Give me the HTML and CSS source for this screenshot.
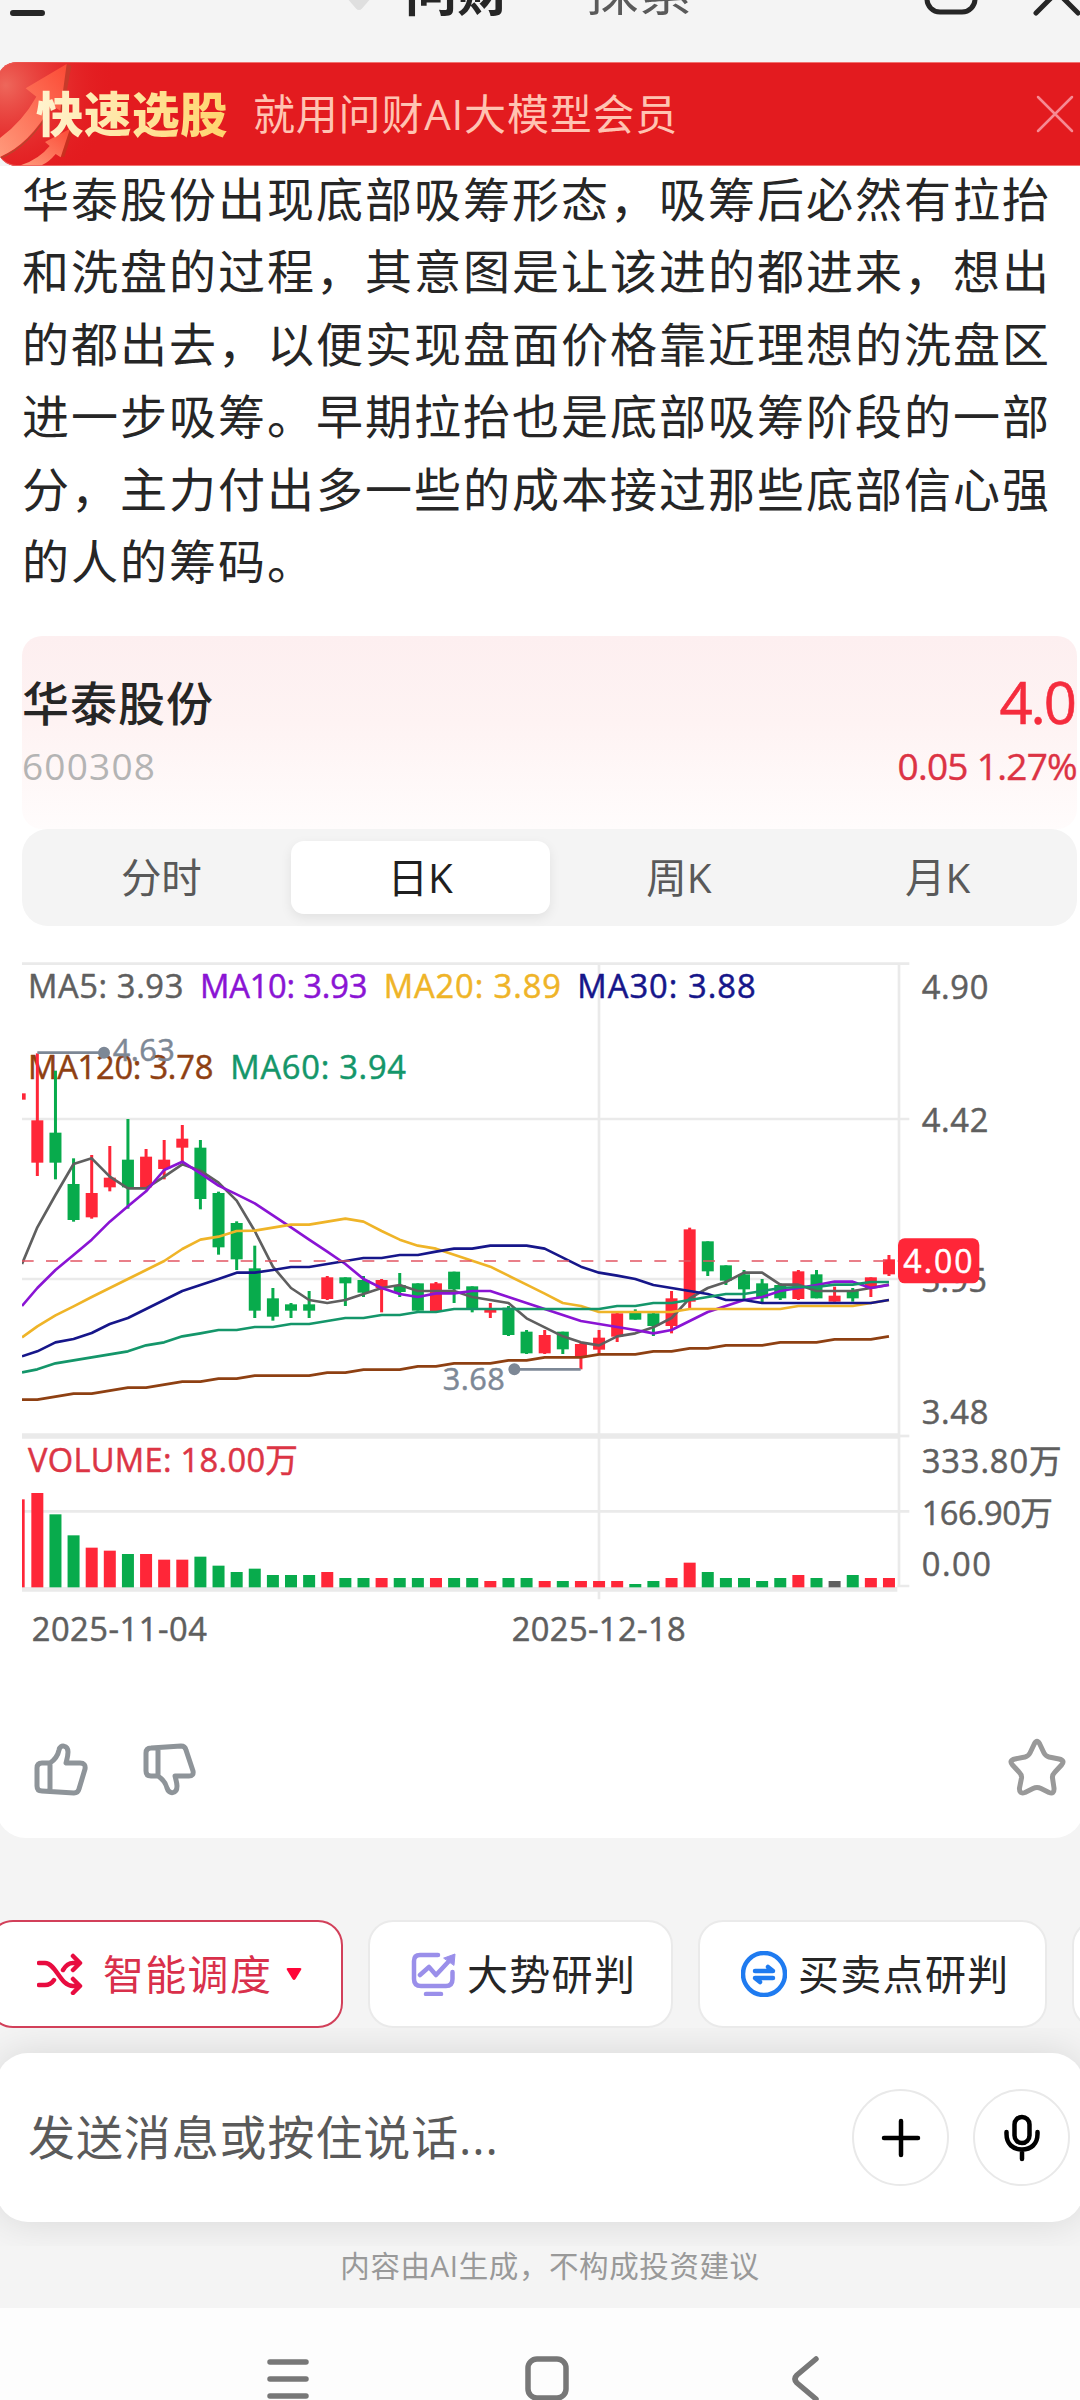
FILE: index.html
```html
<!DOCTYPE html>
<html lang="zh-CN">
<head>
<meta charset="utf-8">
<title>问财</title>
<link rel="stylesheet" href="styles.css">
</head>
<body>
<header class="topbar">
  <div class="topbar-row">
    <svg class="menu-icon" width="35" height="46" viewBox="0 0 35 46"><path d="M3 3H32M3 23H24M3 43H32" /></svg>
    <svg class="gem" width="30" height="30" viewBox="0 0 30 30"><path d="M4 4H26L28 15L18 26.500Q15 29.500 12 26.500L2 15Z"/></svg>
    <span class="tab-main">问财</span>
    <span class="tab-sub">探索</span>
    <svg class="copy-icon" width="56" height="56" viewBox="0 0 56 56"><rect x="3" y="3" width="48" height="48" rx="13"/></svg>
    <svg class="close-icon" width="50" height="50" viewBox="0 0 50 50"><path d="M4 4L46 46M46 4L4 46"/></svg>
  </div>
</header>

<section class="banner">
  <svg class="banner-art" width="150" height="104" viewBox="0 0 450 312">
    <defs>
      <linearGradient id="arrow" x1="0" y1="1" x2="1" y2="0"><stop offset="0" stop-color="#ff9a7c"/><stop offset="1" stop-color="#fb4a35"/></linearGradient>
      <radialGradient id="glow" gradientUnits="userSpaceOnUse" cx="20" cy="70" r="330"><stop offset="0" stop-color="#ee675b"/><stop offset=".35" stop-color="#e94540" stop-opacity=".8"/><stop offset="1" stop-color="#e31b1f" stop-opacity="0"/></radialGradient>
    </defs>
    <rect width="450" height="312" fill="url(#glow)"/>
    <path d="M217 12L203 6L172 134L192 150Z" fill="#c83a2a"/>
    <path d="M0 230Q70 180 112 104L80 79L203 6L184 146L158 130Q90 250 0 286Z" fill="url(#arrow)"/>
    <path d="M0 290Q92 254 160 134" fill="none" stroke="#b8452c" stroke-width="4"/>
    <path d="M222 205L212 200L183 284L196 284Z" fill="#c8301f"/>
    <path d="M65 310Q120 292 152 252L138 240L213 200L185 286L170 276Q150 300 128 310Z" fill="url(#arrow)"/>
  </svg>
  <strong class="banner-title">快速选股</strong>
  <span class="banner-text">就用问财AI大模型会员</span>
  <svg class="banner-close" width="38" height="38" viewBox="0 0 38 38"><path d="M2 2L36 36M36 2L2 36"/></svg>
</section>

<main class="answer">
  <p class="paragraph">华泰股份出现底部吸筹形态，吸筹后必然有拉抬和洗盘的过程，其意图是让该进的都进来，想出的都出去，以便实现盘面价格靠近理想的洗盘区进一步吸筹。早期拉抬也是底部吸筹阶段的一部分，主力付出多一些的成本接过那些底部信心强的人的筹码。</p>

  <section class="quote">
    <div class="quote-row"><h2 class="quote-name">华泰股份</h2><span class="quote-price">4.0</span></div>
    <div class="quote-row"><span class="quote-code">600308</span><span class="quote-change">0.05 1.27%</span></div>
  </section>

  <nav class="periods">
    <span class="period">分时</span>
    <span class="period period-active">日K</span>
    <span class="period">周K</span>
    <span class="period">月K</span>
  </nav>

  <svg class="chart" width="1080" height="720" viewBox="0 0 3240 2160">
    <defs><clipPath id="plot"><rect x="66" y="0" width="2640" height="2000"/></clipPath></defs>
    <g class="grid">
      <path d="M66 71H2728M66 537H2728M66 1017H2728M66 1714H2728M2692 1938H2728M2697 71V1938M1797 71V1978"/>
      <path class="grid-thick" d="M66 1488H2697"/>
      <path d="M2697 1488H2728"/>
      <path class="grid-base" d="M66 1948H2692"/>
    </g>
    <g class="legend">
      <text x="84" y="173" textLength="466" fill="#5f5f5f" stroke="#5f5f5f">MA5: 3.93</text>
      <text x="600" y="173" textLength="502" fill="#8a14d4" stroke="#8a14d4">MA10: 3.93</text>
      <text x="1151" y="173" textLength="532" fill="#efb428" stroke="#efb428">MA20: 3.89</text>
      <text x="1732" y="173" textLength="535" fill="#16168a" stroke="#16168a">MA30: 3.88</text>
    </g>
    <g class="legend">
      <text x="84" y="416" textLength="556" fill="#8e4012" stroke="#8e4012">MA120: 3.78</text>
      <text x="691" y="416" textLength="527" fill="#14966a" stroke="#14966a">MA60: 3.94</text>
      <text x="84" y="1595" textLength="810" fill="#dc3545" stroke="#dc3545">VOLUME: 18.00万</text>
    </g>
    <g class="axis">
      <text x="2765" y="178" textLength="200">4.90</text>
      <text x="2765" y="577" textLength="200">4.42</text>
      <text x="2765" y="1055" textLength="196">3.95</text>
      <text x="2765" y="1453" textLength="200">3.48</text>
      <text x="2765" y="1600" textLength="420">333.80万</text>
      <text x="2765" y="1754" textLength="394">166.90万</text>
      <text x="2765" y="1907" textLength="208">0.00</text>
      <text x="95" y="2102" textLength="526">2025-11-04</text>
      <text x="1535" y="2102" textLength="522">2025-12-18</text>
    </g>
    <g id="series" clip-path="url(#plot)"></g>
    <path class="last-price" d="M66 963H2697"/>
    <g class="marker">
      <path d="M112 338H312M1543 1288H1742"/>
      <circle cx="312" cy="338" r="14"/>
      <circle cx="1543" cy="1288" r="14"/>
      <text x="338" y="364" textLength="186">4.63</text>
      <text x="1328" y="1350" textLength="186">3.68</text>
    </g>
    <rect x="2694" y="895" width="244" height="135" rx="20" fill="#ff2638"/>
    <text class="tag" x="2710" y="1000" textLength="208">4.00</text>
  </svg>

  <footer class="feedback">
    <svg width="54" height="56" viewBox="0 0 54 56"><path d="M16 22V50M8 22H16C22 18 24 14 25 9C26 3 34 4 34 11C34 15 33 18 32 22H46Q52 22 51 28L45 48Q44 52 40 52L8 50Q3 50 3 45V27Q3 22 8 22Z"/></svg>
    <svg width="54" height="56" viewBox="0 0 54 56"><path d="M15 7V35M8 7L38 5Q42 5 43 9L50 30Q51 35 46 35H32C33 39 34 42 34 45C34 53 26 54 24 47C23 43 21 39 15 35H8Q3 35 3 30V12Q3 7 8 7Z"/></svg>
    <svg class="star" width="58" height="58" viewBox="0 0 58 58"><path d="M26.500 5.500Q29 1 31.500 5.500L36 15Q37.500 18 41 19L51 21Q57.500 22.500 53.500 27L47 34Q44 37 44.500 40L46 50Q46.500 56.500 41 54.500L33 50.500Q29 48.500 25 50.500L17 54.500Q11 56.500 11.500 50L13.500 40Q14 37 11 34L4.500 27Q.5 22.500 7 21L17 19Q20.500 18 22 15Z"/></svg>
  </footer>
</main>

<div class="chips">
  <button class="chip chip-active">
    <svg width="46" height="42" viewBox="0 0 46 42"><path d="M2 10H8C19 10 23 33 36 33H41M2 32H8C12 32 15 30 17 27M26 17C29 12 32 10 36 10H41M36 3L43 10L36 17M36 26L43 33L36 40"/></svg>
    <span>智能调度</span>
    <svg class="caret" width="16" height="14" viewBox="0 0 16 14"><path d="M2 1H14Q16 1 15 3L9.500 12Q8 14 6.500 12L1 3Q0 1 2 1Z"/></svg>
  </button>
  <button class="chip chip-trend">
    <svg width="46" height="44" viewBox="0 0 46 44"><path d="M27 3H9Q3 3 3 9V27Q3 34 10 34H35Q41.500 34 41.500 27V20M9 23L18 15L25 23L39 8M15 42H30"/><path class="solid" d="M33 6L44 2L43 13Z"/></svg>
    <span>大势研判</span>
  </button>
  <button class="chip chip-trade">
    <svg width="46" height="46" viewBox="0 0 46 46"><circle cx="23" cy="23" r="21"/><path d="M14 20H32L27 16M32 27H14L19 31"/></svg>
    <span>买卖点研判</span>
  </button>
  <button class="chip chip-more"></button>
</div>

<div class="composer-wrap">
  <div class="composer">
    <span class="placeholder">发送消息或按住说话...</span>
    <button class="round"><svg width="40" height="40" viewBox="0 0 40 40"><path d="M20 3V37M3 20H37"/></svg></button>
    <button class="round"><svg width="40" height="48" viewBox="0 0 40 48"><rect x="12.500" y="3" width="15" height="26" rx="7.500"/><path d="M4.500 18V20C4.500 30 11 35.500 20 35.500S35.500 30 35.500 20V18M20 36V45"/></svg></button>
  </div>
</div>
<p class="disclaimer">内容由AI生成，不构成投资建议</p>
<nav class="sysnav">
  <svg width="42" height="42" viewBox="0 0 42 42"><path d="M3 4H39M3 21H39M3 38H39"/></svg>
  <svg width="44" height="45" viewBox="0 0 44 45"><rect x="3" y="3" width="38" height="39" rx="9"/></svg>
  <svg width="30" height="48" viewBox="0 0 30 48"><path d="M26 4L7 20Q3 24 7 28L26 44"/></svg>
</nav>
<script src="chart.js"></script>
</body>
</html>
```
FILE: styles.css
```css
* { box-sizing: border-box; }

body {
  margin: 0;
  width: 1080px;
  height: 2400px;
  overflow: hidden;
  background: #f4f4f4;
  color: #262626;
  font-family: "Open Sans", "Noto Sans CJK SC", sans-serif;
}

svg { display: block; flex: none; fill: none; stroke-linecap: round; stroke-linejoin: round; }
button { font: inherit; color: inherit; padding: 0; }

/* Top bar, scrolled partly out of view */
.topbar { height: 62px; overflow: hidden; }
.topbar-row { display: flex; align-items: center; height: 60px; margin-top: -39px; padding-left: 10px; }
.topbar-row svg { stroke: #262626; stroke-width: 5; }
.topbar-row .menu-icon { stroke-width: 6; margin-top: 4px; }
.topbar-row .gem { margin-left: 299px; margin-top: 12px; fill: #dfdfdf; stroke: none; }
.tab-main, .tab-sub { flex: none; white-space: nowrap; line-height: 60px; }
.tab-main { margin-left: 31px; font-size: 52px; font-weight: 600; width: 181px; }
.tab-sub { font-size: 53px; color: #5a5a5a; width: 106px; }
.topbar-row .copy-icon { margin-left: 232px; margin-top: -4px; }
.topbar-row .close-icon { margin-left: 52px; margin-top: 2px; }

/* Promotion banner */
.banner {
  display: flex;
  align-items: center;
  height: 104px;
  margin: 0 -20px 0 -3px;
  border-radius: 20px;
  overflow: hidden;
  background: #e31b1f;
  box-shadow: inset 0 1px #f0726f, inset 0 -1px #f0726f;
}
.banner-art { margin-left: 2px; margin-right: -113px; }
.banner-title {
  width: 214px;
  font-size: 47.500px;
  line-height: 60px;
  letter-spacing: .5px;
  font-weight: 900;
  position: relative;
  color: transparent;
  background: linear-gradient(90deg, #fff3cf, #ffe39a 50%, #ffd060);
  background-clip: text;
  -webkit-background-clip: text;
}
.banner-text { margin-left: 3px; font-size: 42px; line-height: 60px; letter-spacing: .8px; color: #ffc3b2; width: 783px; }
.banner-close { stroke: #f68a93; stroke-width: 2.500; }

/* Answer card */
.answer {
  height: 1672px;
  margin: 0 -4px;
  padding: 0 4px;
  background: #fff;
  border-radius: 0 0 30px 30px;
  overflow: hidden;
}
.paragraph {
  margin: -3px 0 0 22px;
  width: 1040px;
  font-size: 47px;
  line-height: 72.400px;
  letter-spacing: 2px;
}
.quote {
  height: 193px;
  margin: 39px 3px 0 22px;
  padding: 30px 0 0;
  border-radius: 20px;
  background: linear-gradient(#fdeff0, #fef3f3 45%, #fffcfc);
}
.quote-row { display: flex; justify-content: space-between; align-items: center; height: 68px; }
.quote-row + .quote-row { height: 62px; }
.quote-name { margin: 0; font-size: 47px; letter-spacing: 1px; font-weight: 500; }
.quote-price { font-size: 58px; letter-spacing: -2px; color: #f52c3d; margin: 2px 2px 0 0; -webkit-text-stroke: .6px #f52c3d; }
.quote-code { font-size: 37px; letter-spacing: 1.200px; color: #b4b4b4; }
.quote-change { font-size: 37px; letter-spacing: -.7px; color: #dc3344; -webkit-text-stroke: .4px #dc3344; }
.periods {
  display: flex;
  height: 97px;
  margin: 0 3px 0 22px;
  padding: 12px 10px;
  background: #f4f4f4;
  border-radius: 26px;
}
.period { flex: 1; display: flex; align-items: center; justify-content: center; font-size: 40.500px; color: #595959; padding: 0 0 4px; }
.period-active { background: #fff; color: #1f1f1f; border-radius: 13px; box-shadow: 0 4px 12px rgba(0, 0, 0, .08); }

/* Chart */
.chart { margin-top: 14px; stroke-linecap: butt; }
.chart text { font-size: 98px; stroke-width: 1.500; }
.grid { stroke: #eaeaea; stroke-width: 8; }
.grid .grid-thick { stroke-width: 17; }
.grid .grid-base { stroke-width: 14; }
.axis { fill: #5f5f5f; stroke: #5f5f5f; }
.last-price { stroke: #e25563; stroke-width: 5; stroke-dasharray: 36 37; stroke-dashoffset: 1; }
.marker { stroke: #7d8896; stroke-width: 8; fill: #7d8896; }
.chart .marker text { font-size: 92px; }
.chart .tag { fill: #fff; stroke: #fff; font-size: 96px; }
.ma-line { stroke-width: 8; fill: none; }

.feedback { display: flex; align-items: center; height: 150px; margin: 32px 14px 0 34px; gap: 55px; }
.feedback svg { stroke: #8e9499; stroke-width: 5; margin-top: 3px; }
.feedback .star { margin: 0 0 0 auto; stroke: #999; }

/* Suggestion chips */
.chips { display: flex; gap: 25px; margin: 82px 0 0 -12px; height: 108px; width: 1092px; overflow: hidden; }
.chip {
  flex: none;
  display: flex;
  align-items: center;
  height: 108px;
  border: 2px solid #eaeaea;
  border-radius: 25px;
  background: #fff;
  font-size: 41px;
  letter-spacing: 1.300px;
  white-space: nowrap;
}
.chip span { margin-top: -4px; }
.chip-active { width: 355px; padding-left: 47px; border-color: #d2405a; color: #d9304b; }
.chip-active svg { stroke: #e80c40; stroke-width: 4.500; margin-right: 20px; }
.chip-active .caret { fill: #ff0538; stroke: none; margin: 0 0 0 14px; }
.chip-trend { width: 305px; padding-left: 41px; }
.chip-trend svg { stroke: #9a8fea; stroke-width: 4.500; margin-right: 10px; }
.chip-trend .solid { fill: #9a8fea; stroke-width: 1; }
.chip-trade { width: 349px; padding-left: 41px; }
.chip-trade svg { stroke: #1f7bf0; stroke-width: 4.500; margin-right: 11px; }
.chip-more { width: 200px; }

/* Message composer */
.composer-wrap { height: 218px; padding-top: 25px; overflow: hidden; }
.composer {
  display: flex;
  align-items: center;
  height: 169px;
  margin: 0 -4px;
  padding: 0 14px 0 32px;
  gap: 24px;
  background: #fff;
  border-radius: 32px;
  box-shadow: 0 0 40px rgba(0, 0, 0, .12);
}
.placeholder { flex: 1; font-size: 47px; letter-spacing: .9px; color: #5a5a5a; margin-top: -7px; }
.round { display: flex; align-items: center; justify-content: center; width: 97px; height: 97px; border: 2px solid #e9e9e9; border-radius: 50%; background: #fff; }
.round svg { stroke: #000; stroke-width: 4.500; }

.disclaimer { margin: 0; height: 62px; line-height: 40px; text-align: center; font-size: 29.500px; letter-spacing: .6px; color: #999; padding-left: 20px; }

/* System navigation */
.sysnav { display: flex; height: 92px; padding: 47px 0 0 267px; background: #fdfdfd; }
.sysnav svg { stroke: #777; stroke-width: 5.500; margin-top: 3px; }
.sysnav svg:nth-child(2) { margin: 1px 0 0 216px; }
.sysnav svg:nth-child(3) { margin: 0 0 0 221px; }
```
FILE: chart.js
```js
// Each candle: colour, wick top, wick bottom, body top, body bottom, volume top.
const RED = '#ff2638', GREEN = '#08ab4c', GREY = '#5f5f5f';
const candles = [
  ['r', 340, 708, 541, 668, 1659], ['g', 392, 718, 578, 668, 1723], ['g', 655, 845, 732, 840, 1786],
  ['r', 645, 836, 759, 832, 1823], ['r', 618, 754, 713, 742, 1832], ['g', 537, 806, 659, 742, 1842],
  ['r', 627, 745, 650, 742, 1842], ['r', 600, 718, 659, 687, 1859], ['r', 555, 668, 596, 623, 1859],
  ['g', 600, 808, 623, 777, 1850], ['g', 755, 944, 759, 922, 1877], ['g', 844, 990, 849, 958, 1896],
  ['g', 917, 1134, 985, 1112, 1886], ['g', 1044, 1142, 1075, 1130, 1905], ['g', 1089, 1134, 1093, 1112, 1905],
  ['g', 1053, 1134, 1093, 1112, 1905], ['r', 1008, 1080, 1012, 1077, 1896], ['g', 1012, 1098, 1012, 1030, 1914],
  ['g', 1008, 1071, 1020, 1058, 1914], ['r', 1017, 1117, 1020, 1044, 1914], ['g', 999, 1071, 1035, 1056, 1914],
  ['g', 1030, 1112, 1030, 1112, 1914], ['r', 1026, 1118, 1030, 1115, 1914], ['g', 995, 1089, 995, 1048, 1914],
  ['g', 1039, 1117, 1039, 1105, 1914], ['r', 1089, 1134, 1108, 1118, 1923], ['g', 1098, 1188, 1103, 1185, 1914],
  ['g', 1170, 1242, 1175, 1240, 1914], ['r', 1170, 1242, 1185, 1240, 1923], ['g', 1175, 1242, 1175, 1228, 1923],
  ['r', 1208, 1288, 1212, 1250, 1923], ['r', 1170, 1242, 1193, 1229, 1923], ['r', 1117, 1206, 1120, 1190, 1923],
  ['g', 1108, 1139, 1117, 1139, 1932], ['g', 1117, 1188, 1120, 1158, 1923], ['r', 1053, 1180, 1075, 1158, 1914],
  ['r', 863, 1108, 868, 1085, 1868], ['g', 904, 1008, 904, 994, 1896], ['g', 976, 1035, 976, 1022, 1914],
  ['g', 990, 1080, 1003, 1048, 1914], ['g', 1017, 1090, 1030, 1075, 1923], ['g', 1030, 1080, 1035, 1075, 1914],
  ['r', 990, 1080, 994, 1077, 1905], ['g', 990, 1075, 1003, 1075, 1914], ['r', 1040, 1085, 1067, 1085, 1923],
  ['g', 1044, 1085, 1050, 1075, 1905], ['r', 1012, 1071, 1012, 1044, 1914], ['r', 945, 1008, 958, 1003, 1914]
];

// Moving averages; the first value is the point on the left edge of the plot.
const averages = [
  ['#8e4012', [1379,1379,1370,1361,1361,1352,1343,1343,1334,1325,1325,1316,1316,1307,1307,1307,1307,1298,1298,1289,1289,1289,1279,1279,1270,1270,1270,1261,1261,1252,1252,1252,1243,1243,1243,1234,1234,1225,1225,1216,1216,1216,1207,1207,1207,1198,1198,1198,1189]],
  ['#5f5f5f', [972,862,765,672,655,710,745,745,710,673,692,728,782,873,980,1044,1080,1089,1080,1062,1044,1035,1053,1053,1053,1071,1080,1089,1135,1162,1189,1207,1216,1189,1180,1162,1134,1075,1044,1026,998,998,1034,1034,1053,1053,1053,1044,1034]],
  ['#8a14d4', [1098,1044,990,945,899,845,799,754,690,665,700,737,763,790,826,862,899,935,972,1017,1044,1062,1071,1060,1060,1053,1053,1071,1089,1107,1125,1143,1152,1161,1170,1180,1170,1143,1116,1098,1080,1071,1053,1044,1035,1025,1025,1044,1035]],
  ['#efb428', [1192,1159,1126,1099,1071,1044,1017,990,963,927,899,890,873,872,863,854,854,845,836,845,873,899,917,926,944,962,980,1007,1034,1061,1089,1098,1116,1116,1116,1116,1116,1107,1107,1107,1107,1107,1107,1098,1098,1098,1098,1089,1080]],
  ['#16168a', [1249,1234,1207,1197,1179,1152,1134,1107,1080,1053,1035,1017,998,998,990,981,981,972,963,954,954,945,945,935,926,926,917,917,917,926,953,980,998,1007,1017,1035,1044,1053,1062,1080,1080,1089,1089,1089,1089,1089,1089,1089,1080]],
  ['#14966a', [1297,1288,1270,1261,1252,1243,1234,1216,1207,1189,1180,1170,1170,1161,1161,1152,1152,1143,1134,1134,1125,1125,1116,1116,1107,1107,1107,1107,1107,1107,1107,1107,1107,1098,1098,1089,1089,1080,1071,1062,1062,1053,1044,1041,1041,1034,1034,1026,1026]]
];

const centre = i => 112 + 54.36 * i;
const box = (x, top, width, bottom, fill) =>
  `<rect x="${x.toFixed(1)}" y="${top}" width="${width}" height="${bottom - top}" fill="${fill}"/>`;

let out = box(60, 460, 17, 479, RED) + box(60, 1678, 14, 1942, RED);
candles.forEach(([kind, high, low, top, bottom, volume], i) => {
  const colour = kind === 'r' ? RED : GREEN;
  const x = centre(i);
  out += box(x - 4.5, high, 9, low, colour);
  out += box(x - 18, top, 36, bottom, colour);
  out += box(x - 18, volume, 36, 1942, i === 44 ? GREY : colour);
});
averages.forEach(([colour, values]) => {
  const points = values.map((y, i) => `${i === 0 ? 66 : centre(i - 1).toFixed(1)},${y}`);
  out += `<polyline class="ma-line" stroke="${colour}" points="${points.join(' ')}"/>`;
});
document.getElementById('series').innerHTML = out;
```
